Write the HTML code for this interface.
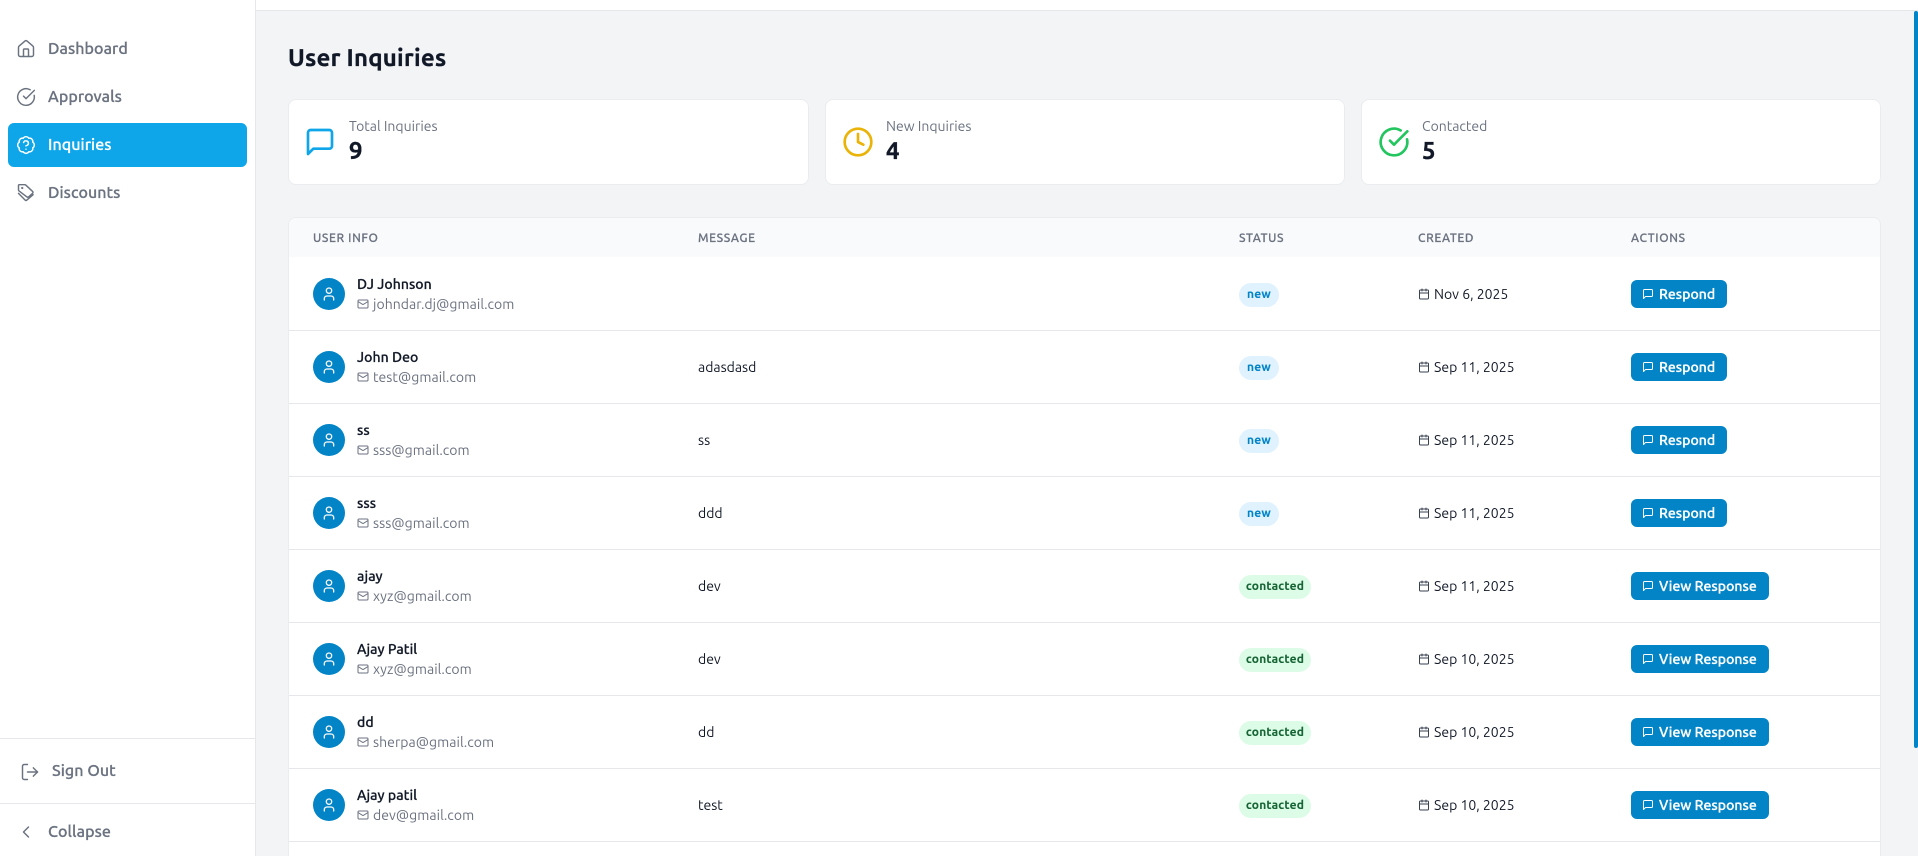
<!DOCTYPE html>
<html><head><meta charset="utf-8"><title>User Inquiries</title>
<style>
*{box-sizing:border-box;margin:0;padding:0}
html,body{width:1918px;height:856px;overflow:hidden;background:#f3f4f6}
body{position:relative;font-family:"Ubuntu","Liberation Sans","DejaVu Sans",sans-serif;color:#111827}
.a{position:absolute;white-space:nowrap}
svg{position:absolute;fill:none;stroke:currentColor;stroke-width:2;stroke-linecap:round;stroke-linejoin:round}
.ni{stroke-width:1.75}
.top{left:0;top:0;width:1918px;height:11px;background:#fff;border-bottom:1px solid #e5e7eb}
.side{left:0;top:0;width:256px;height:856px;background:#fff;border-right:1px solid #e5e7eb}
.nav{left:48px;font-size:16px;line-height:24px;color:#6b7280;font-weight:500;letter-spacing:.05px;-webkit-text-stroke:.25px}
.active{left:8px;top:123px;width:239px;height:44px;background:#0ea5e9;border-radius:6px}
.hr{left:0;width:255px;height:1px;background:#e5e7eb}
.card{top:99px;height:86px;background:#fff;border:1px solid #eaecef;border-radius:8px}
.lbl{top:116px;font-size:14px;line-height:20px;color:#6b7280}
.num{top:135px;font-size:24px;line-height:32px;font-weight:700;color:#111827;-webkit-text-stroke:.3px}
.tbl{left:288px;top:217px;width:1593px;height:639px;background:#fff;border:1px solid #eaecef;border-bottom:0;border-radius:8px 8px 0 0}
.thead{left:289px;top:218px;width:1591px;height:39px;background:#f9fafb;border-radius:8px 8px 0 0}
.th{top:229px;font-size:12px;line-height:20px;color:#6b7280;letter-spacing:.6px;font-weight:500;-webkit-text-stroke:.2px}
.row{left:289px;width:1591px;height:74px;border-bottom:1px solid #e5e7eb}
.av{left:24px;top:21px;width:32px;height:32px;border-radius:50%;background:#0284c7;color:#fff}
.name{left:68px;top:17px;font-size:14px;line-height:20px;color:#111827;font-weight:500;letter-spacing:.05px;-webkit-text-stroke:.25px}
.email{left:84px;top:37px;font-size:14px;line-height:20px;color:#6b7280;letter-spacing:.05px}
.mail{left:68px;top:41px;color:#6b7280}
.msg{left:409px;top:27px;font-size:14px;line-height:20px;color:#111827}
.badge{left:950px;top:26px;height:24px;border-radius:12px;font-size:12px;line-height:24px;font-weight:700;text-align:center;letter-spacing:.2px;-webkit-text-stroke:.1px}
.new{width:40px;background:#e0f2fe;color:#0284c7}
.con{width:72px;background:#dcfce7;color:#166534}
.cal{left:1129px;top:31px;color:#374151}
.date{left:1145px;top:27px;font-size:14px;line-height:20px;color:#111827}
.btn{left:1342px;top:23px;height:28px;border-radius:6px;background:#0284c7;color:#fff;font-size:14px;line-height:28px;font-weight:500}
.btn svg{left:11px;top:8px}
.btn span{position:absolute;left:28px;top:0;letter-spacing:.05px;-webkit-text-stroke:.3px}
.r{width:96px}.v{width:138px}
.sb{left:1914px;top:11px;width:4px;height:737px;background:#0284c7;border-radius:3px}
</style></head><body>
<div class="a top"></div>
<div class="a side"></div>

<svg class="ni" style="left:16px;top:39px;color:#6b7280" width="20" height="20" viewBox="0 0 24 24"><path d="M15 21v-8a1 1 0 0 0-1-1h-4a1 1 0 0 0-1 1v8"/><path d="M3 10a2 2 0 0 1 .709-1.528l7-5.999a2 2 0 0 1 2.582 0l7 5.999A2 2 0 0 1 21 10v9a2 2 0 0 1-2 2H5a2 2 0 0 1-2-2z"/></svg>
<div class="a nav" style="top:37px">Dashboard</div>
<svg class="ni" style="left:16px;top:87px;color:#6b7280" width="20" height="20" viewBox="0 0 24 24"><path d="M21.801 10A10 10 0 1 1 17 3.335"/><path d="m9 11 3 3L22 4"/></svg>
<div class="a nav" style="top:85px">Approvals</div>
<div class="a active"></div>
<svg class="ni" style="left:16px;top:135px;color:#fff" width="20" height="20" viewBox="0 0 24 24"><path d="M3.85 8.62a4 4 0 0 1 4.78-4.77 4 4 0 0 1 6.74 0 4 4 0 0 1 4.78 4.78 4 4 0 0 1 0 6.74 4 4 0 0 1-4.77 4.78 4 4 0 0 1-6.75 0 4 4 0 0 1-4.78-4.77 4 4 0 0 1 0-6.76Z"/><path d="M9.09 9a3 3 0 0 1 5.83 1c0 2-3 3-3 3"/><path d="M12 17h.01"/></svg>
<div class="a nav" style="top:133px;color:#fff">Inquiries</div>
<svg class="ni" style="left:16px;top:183px;color:#6b7280" width="20" height="20" viewBox="0 0 24 24"><path d="M4 2h6.5a2 2 0 0 1 1.4.6l8 7.5a1.6 1.6 0 0 1 0 2.3l-4.5 4a2 2 0 0 1-2.7 0L3.6 9.5A2 2 0 0 1 3 8V3a1 1 0 0 1 1-1z"/><path d="M3 12.5l8 8a1.5 1.5 0 0 0 2 0l7.5-6.5"/><circle cx="7.5" cy="6" r=".5" fill="currentColor"/></svg>
<div class="a nav" style="top:181px">Discounts</div>

<div class="a hr" style="top:738px"></div>
<svg class="ni" style="left:20px;top:762px;color:#6b7280" width="20" height="20" viewBox="0 0 24 24"><path d="M9 21H5a2 2 0 0 1-2-2V5a2 2 0 0 1 2-2h4"/><path d="m16 17 5-5-5-5"/><path d="M21 12H9"/></svg>
<div class="a nav" style="left:52px;top:759px">Sign Out</div>
<div class="a hr" style="top:803px"></div>
<svg class="ni" style="left:16px;top:822px;color:#6b7280" width="20" height="20" viewBox="0 0 24 24"><path d="m15 18-6-6 6-6"/></svg>
<div class="a nav" style="top:820px">Collapse</div>

<div class="a" style="left:288px;top:42px;font-size:24px;line-height:32px;font-weight:700;color:#111827;letter-spacing:.2px;-webkit-text-stroke:.3px">User Inquiries</div>

<div class="a card" style="left:288px;width:521px"></div>
<svg style="left:304px;top:126px;color:#0ea5e9" width="32" height="32" viewBox="0 0 24 24"><path d="M21 15a2 2 0 0 1-2 2H7l-4 4V5a2 2 0 0 1 2-2h14a2 2 0 0 1 2 2z"/></svg>
<div class="a lbl" style="left:349px">Total Inquiries</div>
<div class="a num" style="left:349px">9</div>

<div class="a card" style="left:825px;width:520px"></div>
<svg style="left:842px;top:126px;color:#eab308" width="32" height="32" viewBox="0 0 24 24"><circle cx="12" cy="12" r="10"/><path d="M12 6v6l4 2"/></svg>
<div class="a lbl" style="left:886px">New Inquiries</div>
<div class="a num" style="left:886px">4</div>

<div class="a card" style="left:1361px;width:520px"></div>
<svg style="left:1378px;top:126px;color:#22c55e" width="32" height="32" viewBox="0 0 24 24"><path d="M21.801 10A10 10 0 1 1 17 3.335"/><path d="m9 11 3 3L22 4"/></svg>
<div class="a lbl" style="left:1422px">Contacted</div>
<div class="a num" style="left:1422px">5</div>

<div class="a tbl"></div>
<div class="a thead"></div>
<div class="a th" style="left:313px">USER INFO</div>
<div class="a th" style="left:698px">MESSAGE</div>
<div class="a th" style="left:1239px">STATUS</div>
<div class="a th" style="left:1418px">CREATED</div>
<div class="a th" style="left:1631px">ACTIONS</div>

<div class="a row" style="top:257px">
<div class="a av"><svg style="left:8px;top:8px" width="16" height="16" viewBox="0 0 24 24"><path d="M19 21v-2a4 4 0 0 0-4-4H9a4 4 0 0 0-4 4v2"/><circle cx="12" cy="7" r="4"/></svg></div>
<div class="a name">DJ Johnson</div>
<svg class="mail" width="12" height="12" viewBox="0 0 24 24"><rect x="2" y="4" width="20" height="16" rx="2"/><path d="m22 7-8.97 5.7a1.94 1.94 0 0 1-2.06 0L2 7"/></svg>
<div class="a email">johndar.dj@gmail.com</div>
<div class="a badge new">new</div>
<svg class="cal" width="12" height="12" viewBox="0 0 24 24"><path d="M8 2v4"/><path d="M16 2v4"/><rect x="3" y="4" width="18" height="18" rx="2"/><path d="M3 10h18"/></svg>
<div class="a date">Nov 6, 2025</div>
<div class="a btn r"><svg width="12" height="12" viewBox="0 0 24 24"><path d="M21 15a2 2 0 0 1-2 2H7l-4 4V5a2 2 0 0 1 2-2h14a2 2 0 0 1 2 2z"/></svg><span>Respond</span></div>
</div>

<div class="a row" style="top:330px">
<div class="a av"><svg style="left:8px;top:8px" width="16" height="16" viewBox="0 0 24 24"><path d="M19 21v-2a4 4 0 0 0-4-4H9a4 4 0 0 0-4 4v2"/><circle cx="12" cy="7" r="4"/></svg></div>
<div class="a name">John Deo</div>
<svg class="mail" width="12" height="12" viewBox="0 0 24 24"><rect x="2" y="4" width="20" height="16" rx="2"/><path d="m22 7-8.97 5.7a1.94 1.94 0 0 1-2.06 0L2 7"/></svg>
<div class="a email">test@gmail.com</div>
<div class="a msg">adasdasd</div>
<div class="a badge new">new</div>
<svg class="cal" width="12" height="12" viewBox="0 0 24 24"><path d="M8 2v4"/><path d="M16 2v4"/><rect x="3" y="4" width="18" height="18" rx="2"/><path d="M3 10h18"/></svg>
<div class="a date">Sep 11, 2025</div>
<div class="a btn r"><svg width="12" height="12" viewBox="0 0 24 24"><path d="M21 15a2 2 0 0 1-2 2H7l-4 4V5a2 2 0 0 1 2-2h14a2 2 0 0 1 2 2z"/></svg><span>Respond</span></div>
</div>

<div class="a row" style="top:403px">
<div class="a av"><svg style="left:8px;top:8px" width="16" height="16" viewBox="0 0 24 24"><path d="M19 21v-2a4 4 0 0 0-4-4H9a4 4 0 0 0-4 4v2"/><circle cx="12" cy="7" r="4"/></svg></div>
<div class="a name">ss</div>
<svg class="mail" width="12" height="12" viewBox="0 0 24 24"><rect x="2" y="4" width="20" height="16" rx="2"/><path d="m22 7-8.97 5.7a1.94 1.94 0 0 1-2.06 0L2 7"/></svg>
<div class="a email">sss@gmail.com</div>
<div class="a msg">ss</div>
<div class="a badge new">new</div>
<svg class="cal" width="12" height="12" viewBox="0 0 24 24"><path d="M8 2v4"/><path d="M16 2v4"/><rect x="3" y="4" width="18" height="18" rx="2"/><path d="M3 10h18"/></svg>
<div class="a date">Sep 11, 2025</div>
<div class="a btn r"><svg width="12" height="12" viewBox="0 0 24 24"><path d="M21 15a2 2 0 0 1-2 2H7l-4 4V5a2 2 0 0 1 2-2h14a2 2 0 0 1 2 2z"/></svg><span>Respond</span></div>
</div>

<div class="a row" style="top:476px">
<div class="a av"><svg style="left:8px;top:8px" width="16" height="16" viewBox="0 0 24 24"><path d="M19 21v-2a4 4 0 0 0-4-4H9a4 4 0 0 0-4 4v2"/><circle cx="12" cy="7" r="4"/></svg></div>
<div class="a name">sss</div>
<svg class="mail" width="12" height="12" viewBox="0 0 24 24"><rect x="2" y="4" width="20" height="16" rx="2"/><path d="m22 7-8.97 5.7a1.94 1.94 0 0 1-2.06 0L2 7"/></svg>
<div class="a email">sss@gmail.com</div>
<div class="a msg">ddd</div>
<div class="a badge new">new</div>
<svg class="cal" width="12" height="12" viewBox="0 0 24 24"><path d="M8 2v4"/><path d="M16 2v4"/><rect x="3" y="4" width="18" height="18" rx="2"/><path d="M3 10h18"/></svg>
<div class="a date">Sep 11, 2025</div>
<div class="a btn r"><svg width="12" height="12" viewBox="0 0 24 24"><path d="M21 15a2 2 0 0 1-2 2H7l-4 4V5a2 2 0 0 1 2-2h14a2 2 0 0 1 2 2z"/></svg><span>Respond</span></div>
</div>

<div class="a row" style="top:549px">
<div class="a av"><svg style="left:8px;top:8px" width="16" height="16" viewBox="0 0 24 24"><path d="M19 21v-2a4 4 0 0 0-4-4H9a4 4 0 0 0-4 4v2"/><circle cx="12" cy="7" r="4"/></svg></div>
<div class="a name">ajay</div>
<svg class="mail" width="12" height="12" viewBox="0 0 24 24"><rect x="2" y="4" width="20" height="16" rx="2"/><path d="m22 7-8.97 5.7a1.94 1.94 0 0 1-2.06 0L2 7"/></svg>
<div class="a email">xyz@gmail.com</div>
<div class="a msg">dev</div>
<div class="a badge con">contacted</div>
<svg class="cal" width="12" height="12" viewBox="0 0 24 24"><path d="M8 2v4"/><path d="M16 2v4"/><rect x="3" y="4" width="18" height="18" rx="2"/><path d="M3 10h18"/></svg>
<div class="a date">Sep 11, 2025</div>
<div class="a btn v"><svg width="12" height="12" viewBox="0 0 24 24"><path d="M21 15a2 2 0 0 1-2 2H7l-4 4V5a2 2 0 0 1 2-2h14a2 2 0 0 1 2 2z"/></svg><span>View Response</span></div>
</div>

<div class="a row" style="top:622px">
<div class="a av"><svg style="left:8px;top:8px" width="16" height="16" viewBox="0 0 24 24"><path d="M19 21v-2a4 4 0 0 0-4-4H9a4 4 0 0 0-4 4v2"/><circle cx="12" cy="7" r="4"/></svg></div>
<div class="a name">Ajay Patil</div>
<svg class="mail" width="12" height="12" viewBox="0 0 24 24"><rect x="2" y="4" width="20" height="16" rx="2"/><path d="m22 7-8.97 5.7a1.94 1.94 0 0 1-2.06 0L2 7"/></svg>
<div class="a email">xyz@gmail.com</div>
<div class="a msg">dev</div>
<div class="a badge con">contacted</div>
<svg class="cal" width="12" height="12" viewBox="0 0 24 24"><path d="M8 2v4"/><path d="M16 2v4"/><rect x="3" y="4" width="18" height="18" rx="2"/><path d="M3 10h18"/></svg>
<div class="a date">Sep 10, 2025</div>
<div class="a btn v"><svg width="12" height="12" viewBox="0 0 24 24"><path d="M21 15a2 2 0 0 1-2 2H7l-4 4V5a2 2 0 0 1 2-2h14a2 2 0 0 1 2 2z"/></svg><span>View Response</span></div>
</div>

<div class="a row" style="top:695px">
<div class="a av"><svg style="left:8px;top:8px" width="16" height="16" viewBox="0 0 24 24"><path d="M19 21v-2a4 4 0 0 0-4-4H9a4 4 0 0 0-4 4v2"/><circle cx="12" cy="7" r="4"/></svg></div>
<div class="a name">dd</div>
<svg class="mail" width="12" height="12" viewBox="0 0 24 24"><rect x="2" y="4" width="20" height="16" rx="2"/><path d="m22 7-8.97 5.7a1.94 1.94 0 0 1-2.06 0L2 7"/></svg>
<div class="a email">sherpa@gmail.com</div>
<div class="a msg">dd</div>
<div class="a badge con">contacted</div>
<svg class="cal" width="12" height="12" viewBox="0 0 24 24"><path d="M8 2v4"/><path d="M16 2v4"/><rect x="3" y="4" width="18" height="18" rx="2"/><path d="M3 10h18"/></svg>
<div class="a date">Sep 10, 2025</div>
<div class="a btn v"><svg width="12" height="12" viewBox="0 0 24 24"><path d="M21 15a2 2 0 0 1-2 2H7l-4 4V5a2 2 0 0 1 2-2h14a2 2 0 0 1 2 2z"/></svg><span>View Response</span></div>
</div>

<div class="a row" style="top:768px">
<div class="a av"><svg style="left:8px;top:8px" width="16" height="16" viewBox="0 0 24 24"><path d="M19 21v-2a4 4 0 0 0-4-4H9a4 4 0 0 0-4 4v2"/><circle cx="12" cy="7" r="4"/></svg></div>
<div class="a name">Ajay patil</div>
<svg class="mail" width="12" height="12" viewBox="0 0 24 24"><rect x="2" y="4" width="20" height="16" rx="2"/><path d="m22 7-8.97 5.7a1.94 1.94 0 0 1-2.06 0L2 7"/></svg>
<div class="a email">dev@gmail.com</div>
<div class="a msg">test</div>
<div class="a badge con">contacted</div>
<svg class="cal" width="12" height="12" viewBox="0 0 24 24"><path d="M8 2v4"/><path d="M16 2v4"/><rect x="3" y="4" width="18" height="18" rx="2"/><path d="M3 10h18"/></svg>
<div class="a date">Sep 10, 2025</div>
<div class="a btn v"><svg width="12" height="12" viewBox="0 0 24 24"><path d="M21 15a2 2 0 0 1-2 2H7l-4 4V5a2 2 0 0 1 2-2h14a2 2 0 0 1 2 2z"/></svg><span>View Response</span></div>
</div>

<div class="a sb"></div>
</body></html>
